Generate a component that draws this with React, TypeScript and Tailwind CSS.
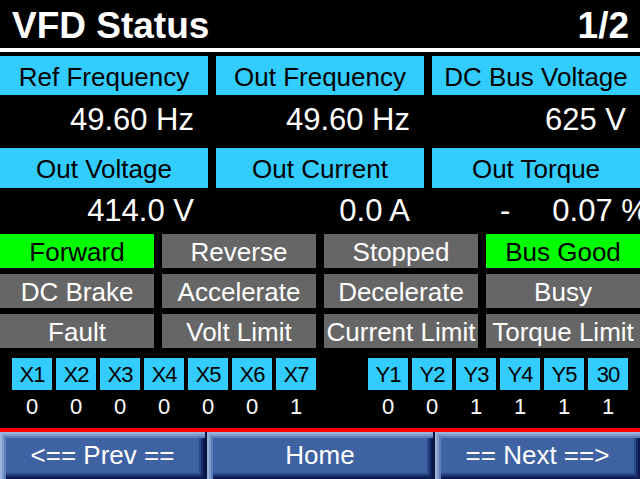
import React from "react";

const font = { fontFamily: '"Liberation Sans", Arial, sans-serif' };

const params = [
  [
    { label: "Ref Frequency", value: "49.60 Hz" },
    { label: "Out Frequency", value: "49.60 Hz" },
    { label: "DC Bus Voltage", value: "625 V" },
  ],
  [
    { label: "Out Voltage", value: "414.0 V" },
    { label: "Out Current", value: "0.0 A" },
    { label: "Out Torque", value: "" },
  ],
];

const flags = [
  { label: "Forward", on: true },
  { label: "Reverse", on: false },
  { label: "Stopped", on: false },
  { label: "Bus Good", on: true },
  { label: "DC Brake", on: false },
  { label: "Accelerate", on: false },
  { label: "Decelerate", on: false },
  { label: "Busy", on: false },
  { label: "Fault", on: false },
  { label: "Volt Limit", on: false },
  { label: "Current Limit", on: false },
  { label: "Torque Limit", on: false },
];

const inputs = [
  ["X1", 0],
  ["X2", 0],
  ["X3", 0],
  ["X4", 0],
  ["X5", 0],
  ["X6", 0],
  ["X7", 1],
] as const;

const outputs = [
  ["Y1", 0],
  ["Y2", 0],
  ["Y3", 1],
  ["Y4", 1],
  ["Y5", 1],
  ["30", 1],
] as const;

function IoGroup({ items }: { items: readonly (readonly [string, number])[] }) {
  return (
    <div className="flex gap-[4px]">
      {items.map(([name, v]) => (
        <div key={name} className="flex w-[40px] flex-col items-center">
          <div className="flex h-[32px] w-[40px] items-center justify-center pt-[1px] bg-[#33ccff] text-[22px] leading-none tracking-[-1px] text-black">
            {name}
          </div>
          <div className="mt-[6px] text-[22px] leading-[22px] text-white">{v}</div>
        </div>
      ))}
    </div>
  );
}

function NavButton({ label, className }: { label: string; className: string }) {
  return (
    <div
      className={
        "flex h-full items-center justify-center bg-[#3f62a3] text-[26px] text-white shadow-[inset_2px_2px_0_#9db2da,inset_4px_4px_0_#7f9bcc,inset_6px_6px_0_#5f7fbb,inset_-2px_-2px_0_#0c1a4e,inset_-4px_-4px_0_#1a2e6c,inset_-6px_-6px_0_#2b4888] " +
        className
      }
    >
      {label}
    </div>
  );
}

export default function App() {
  return (
    <div className="flex h-[479px] w-[640px] flex-col overflow-hidden bg-black" style={font}>
      {/* Title */}
      <div className="flex h-[50px] items-center justify-between pl-[12px] pr-[11px] pt-[2px] text-[37px] font-bold leading-none text-white">
        <span>VFD Status</span>
        <span>1/2</span>
      </div>
      <div className="h-[4px] bg-white" />

      {/* Parameters */}
      <div className="mt-[4px] flex flex-col">
        {params.map((row, ri) => (
          <div key={ri} className="grid grid-cols-3 gap-x-[8px]">
            {row.map((p) => (
              <div key={p.label} className="flex flex-col">
                <div
                  className={
                    "flex items-center justify-center bg-[#33ccff] pt-[3px] text-[26px] text-black " +
                    (ri === 0 ? "h-[39px]" : "h-[40px]")
                  }
                >
                  {p.label}
                </div>
                <div
                  className={
                    "flex items-center justify-end whitespace-nowrap pr-[14px] text-[31px] text-white " +
                    (ri === 0 ? "h-[53px] pb-[2px]" : "h-[46px]")
                  }
                >
                  {p.label === "Out Torque" ? (
                    <div className="flex w-full pl-[68px]">
                      <span>-</span>
                      <span className="ml-[42px]">0.07 %</span>
                    </div>
                  ) : (
                    p.value
                  )}
                </div>
              </div>
            ))}
          </div>
        ))}
      </div>

      {/* Status flags */}
      <div className="grid grid-cols-4 gap-x-[8px] gap-y-[6px]">
        {flags.map((f) => (
          <div
            key={f.label}
            className={
              "flex h-[34px] items-center justify-center whitespace-nowrap pt-[2px] text-[26px] " +
              (f.on ? "bg-[#00ff00] text-black" : "bg-[#666666] text-white")
            }
          >
            {f.label}
          </div>
        ))}
      </div>

      {/* Inputs / outputs */}
      <div className="mt-[10px] flex justify-between pl-[12px] pr-[12px]">
        <IoGroup items={inputs} />
        <IoGroup items={outputs} />
      </div>

      <div className="mt-[10px] h-[4px] bg-[#ff0000]" />

      {/* Navigation */}
      <div className="flex h-[49px] gap-[2px] bg-[#0a1440]">
        <NavButton label="<== Prev ==" className="w-[205px]" />
        <NavButton label="Home" className="w-[226px]" />
        <NavButton label="== Next ==>" className="flex-1" />
      </div>
    </div>
  );
}
